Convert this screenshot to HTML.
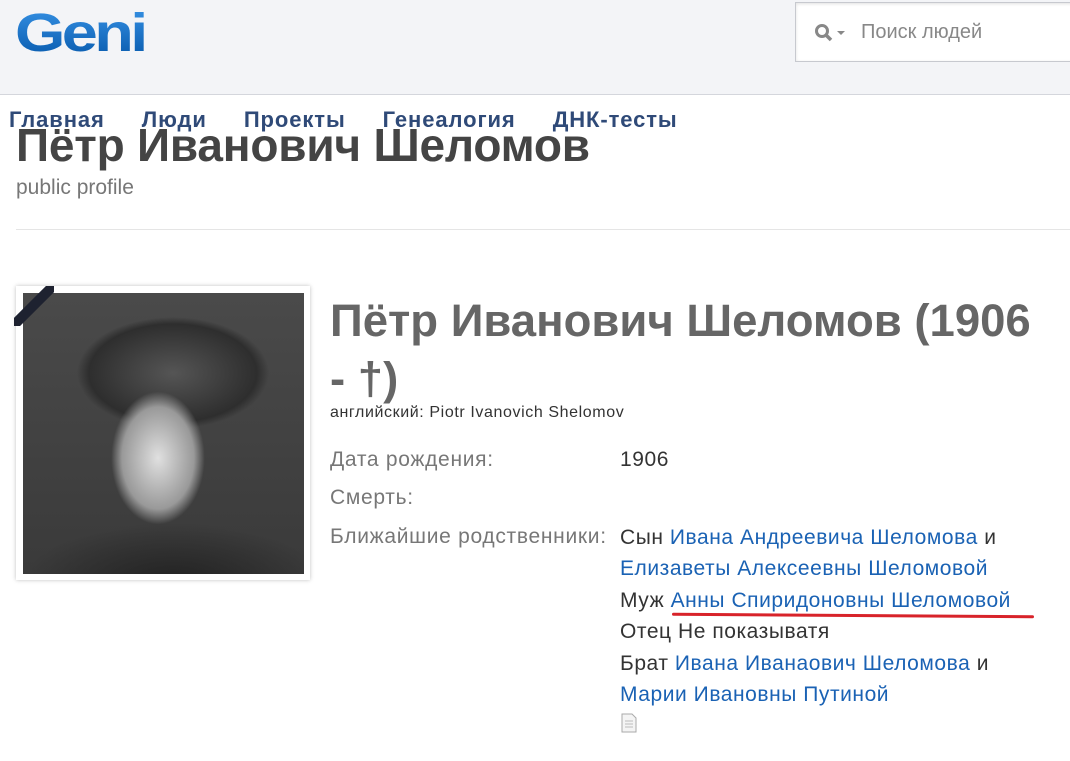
<!DOCTYPE html>
<html><head><meta charset="utf-8"><style>
body{margin:0;width:1070px;height:761px;overflow:hidden;background:#fff;font-family:"Liberation Sans",sans-serif;position:relative}
.hdr{position:absolute;left:0;top:0;width:1070px;height:94px;background:#f3f4f7;border-bottom:1px solid #d4d6dc}
.logo{position:absolute;left:15px;top:2px;font:bold 54px "Liberation Sans",sans-serif;letter-spacing:-3px;transform:scaleX(1.2);transform-origin:0 0;background:linear-gradient(#3a95e8,#0355a8);-webkit-background-clip:text;color:transparent}
.search{position:absolute;left:795px;top:2px;width:290px;height:58px;background:#fff;border:1px solid #c7c9cf;box-shadow:inset 0 1px 3px rgba(0,0,0,.12)}
.search span{position:absolute;left:65px;top:18px;font-size:20px;color:#888}
.nav{position:absolute;top:107px;left:9px;font-weight:bold;font-size:22px;color:#2f4a78;letter-spacing:.9px}
.nav span{margin-right:30px}
.t1{position:absolute;left:16px;top:118px;font-weight:bold;font-size:46px;color:#444;letter-spacing:-.2px}
.pp{position:absolute;left:16px;top:176px;font-size:21px;color:#777}
.hr{position:absolute;left:16px;top:229px;width:1054px;height:1px;background:#e5e5e5}
.frame{position:absolute;left:16px;top:286px;width:294px;height:294px;background:#fff;box-shadow:0 0 4px rgba(0,0,0,.25)}
.photo{position:absolute;left:7px;top:7px;width:281px;height:281px;background:radial-gradient(ellipse 60px 85px at 135px 165px,#e0e0e0,#999 60%,transparent 78%),radial-gradient(ellipse 120px 70px at 150px 80px,#555,#2e2e2e 70%,transparent 80%),radial-gradient(ellipse 150px 60px at 150px 290px,#222,transparent),linear-gradient(#4a4a4a,#3a3a3a);overflow:hidden}
.name{position:absolute;left:330px;top:292px;width:705px;font-weight:bold;font-size:45.5px;line-height:58px;color:#666}
.eng{position:absolute;left:330px;top:404px;font-size:16px;color:#333;letter-spacing:.6px}
.lab{position:absolute;left:330px;font-size:21px;color:#777;letter-spacing:.7px}
.val{position:absolute;left:620px;font-size:21px;color:#333;letter-spacing:.55px}
a{color:#1a62b4;text-decoration:none}
</style></head><body>
<div class="hdr"><div class="logo">Geni</div><div class="search"><svg style="position:absolute;left:18px;top:20px" width="34" height="20"><circle cx="8" cy="8" r="5.5" fill="none" stroke="#888" stroke-width="3"/><path d="M12 12l5 5" stroke="#888" stroke-width="3.5"/><path d="M23 8l4 4 4-4z" fill="#888"/></svg><span>Поиск людей</span></div></div>
<div class="t1">Пётр Иванович Шеломов</div>
<div class="nav"><span>Главная</span> <span>Люди</span> <span>Проекты</span> <span>Генеалогия</span> <span>ДНК-тесты</span></div>
<div class="pp">public profile</div>
<div class="hr"></div>
<div class="frame"><div class="photo"></div></div>
<div style="position:absolute;left:14px;top:286px;width:40px;height:40px;overflow:hidden"><div style="position:absolute;left:-20px;top:14px;width:80px;height:10px;background:#1e2230;transform:rotate(-45deg)"></div></div>
<div class="name">Пётр Иванович Шеломов (1906 - †)</div>
<div class="eng">английский: Piotr Ivanovich Shelomov</div>
<div class="lab" style="top:448px">Дата рождения:</div><div class="val" style="top:448px">1906</div>
<div class="lab" style="top:486px">Смерть:</div>
<div class="lab" style="top:525px">Ближайшие родственники:</div>
<div class="val" style="top:522px;line-height:31.4px">Сын <a>Ивана Андреевича Шеломова</a> и<br><a>Елизаветы Алексеевны Шеломовой</a><br>Муж <a>Анны Спиридоновны Шеломовой</a><br>Отец Не показыватя<br>Брат <a>Ивана Иванаович Шеломова</a> и<br><a>Марии Ивановны Путиной</a></div>
<div style="position:absolute;left:672px;top:614px;width:362px;height:3px;background:#d8232a;border-radius:2px;transform:rotate(.4deg)"></div>
<svg style="position:absolute;left:621px;top:713px" width="16" height="20"><path d="M1 1h10l4 4v14H1z" fill="#f4f4f4" stroke="#aaa"/><path d="M4 8h8M4 11h8M4 14h8" stroke="#bbb"/></svg>
</body></html>
